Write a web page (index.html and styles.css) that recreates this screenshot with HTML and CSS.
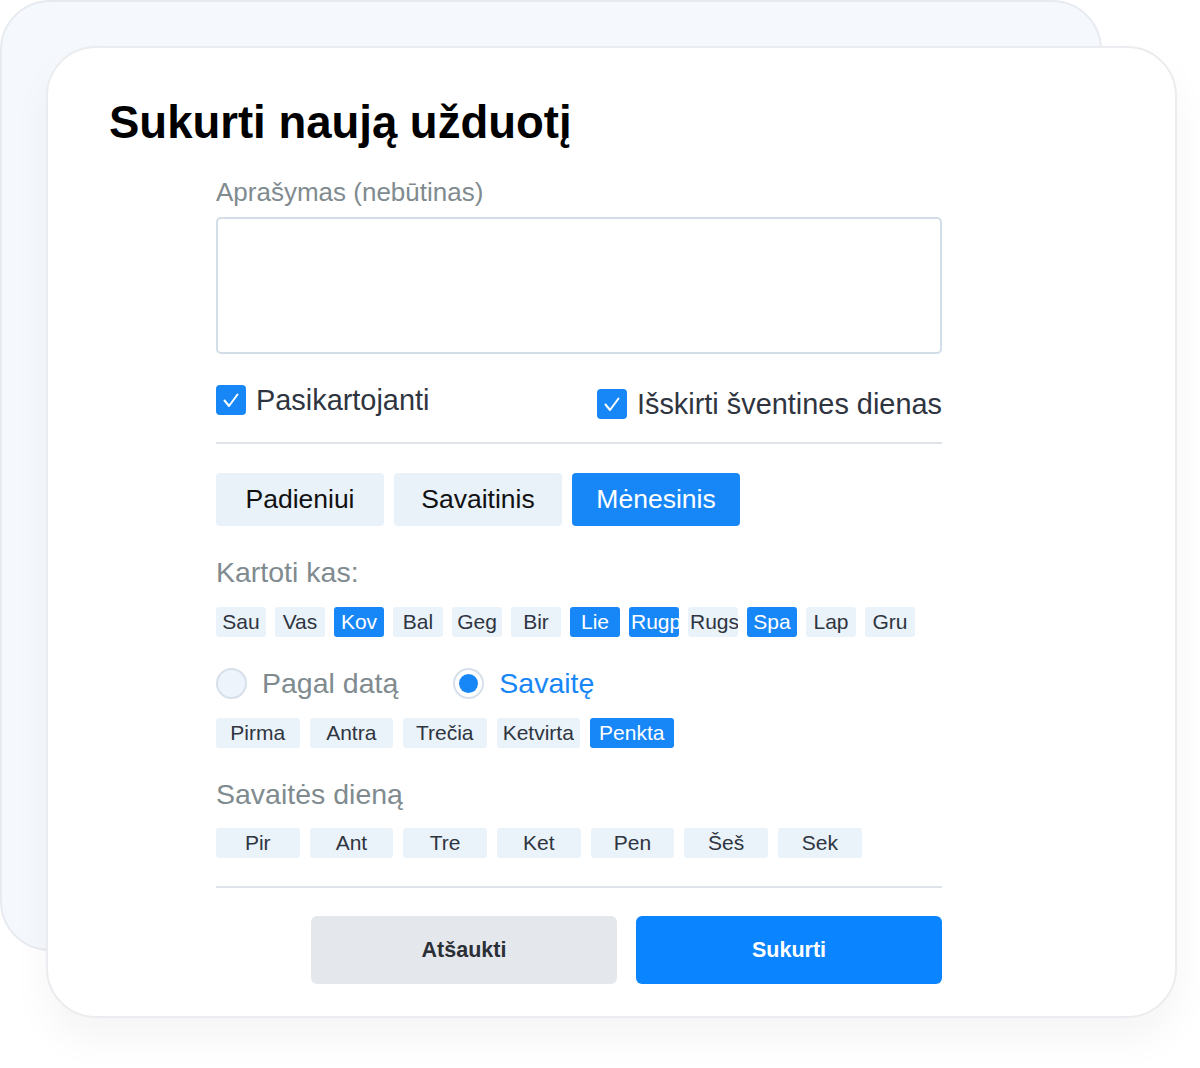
FILE: index.html
```html
<!DOCTYPE html>
<html lang="lt">
<head>
<meta charset="utf-8">
<title>Sukurti naują užduotį</title>
<link rel="stylesheet" href="styles.css">
</head>
<body>
<div class="stage">
  <div class="card">
    <h1 class="title">Sukurti naują užduotį</h1>
    <div class="form">
      <div class="label label-sm">Aprašymas (nebūtinas)</div>
      <div class="textarea"></div>

      <div class="check-row">
        <label class="check">
          <span class="box"><svg viewBox="0 0 30 30" width="30" height="30"><polyline points="8.5,15.5 13,21 21.5,9.5" fill="none" stroke="#fff" stroke-width="2" stroke-linecap="round" stroke-linejoin="round"/></svg></span>
          <span class="check-text">Pasikartojanti</span>
        </label>
        <label class="check check-low">
          <span class="box"><svg viewBox="0 0 30 30" width="30" height="30"><polyline points="8.5,15.5 13,21 21.5,9.5" fill="none" stroke="#fff" stroke-width="2" stroke-linecap="round" stroke-linejoin="round"/></svg></span>
          <span class="check-text">Išskirti šventines dienas</span>
        </label>
      </div>

      <div class="divider div-1"></div>

      <div class="segments">
        <div class="seg">Padieniui</div>
        <div class="seg">Savaitinis</div>
        <div class="seg seg-active">Mėnesinis</div>
      </div>

      <div class="label label-kartoti">Kartoti kas:</div>
      <div class="chips months">
        <span class="chip">Sau</span>
        <span class="chip">Vas</span>
        <span class="chip on">Kov</span>
        <span class="chip">Bal</span>
        <span class="chip">Geg</span>
        <span class="chip">Bir</span>
        <span class="chip on">Lie</span>
        <span class="chip on">Rugp</span>
        <span class="chip">Rugs</span>
        <span class="chip on">Spa</span>
        <span class="chip">Lap</span>
        <span class="chip">Gru</span>
      </div>

      <div class="radio-row">
        <label class="radio"><span class="circle"></span><span class="radio-text">Pagal datą</span></label>
        <label class="radio radio-on"><span class="circle"><span class="dot"></span></span><span class="radio-text">Savaitę</span></label>
      </div>

      <div class="chips weeks">
        <span class="chip wide">Pirma</span>
        <span class="chip wide">Antra</span>
        <span class="chip wide">Trečia</span>
        <span class="chip wide">Ketvirta</span>
        <span class="chip wide on">Penkta</span>
      </div>

      <div class="label label-day">Savaitės dieną</div>
      <div class="chips days">
        <span class="chip wide">Pir</span>
        <span class="chip wide">Ant</span>
        <span class="chip wide">Tre</span>
        <span class="chip wide">Ket</span>
        <span class="chip wide">Pen</span>
        <span class="chip wide">Šeš</span>
        <span class="chip wide">Sek</span>
      </div>

      <div class="divider div-2"></div>

      <div class="actions">
        <button class="btn btn-cancel">Atšaukti</button>
        <button class="btn btn-primary">Sukurti</button>
      </div>
    </div>
  </div>
</div>
</body>
</html>
```

FILE: styles.css
```css
* { box-sizing: border-box; }

html, body {
  margin: 0;
  padding: 0;
  background: #ffffff;
}

body {
  font-family: "Liberation Sans", Arial, Helvetica, sans-serif;
  color: #2f3540;
}

.stage {
  position: relative;
  width: 1200px;
  height: 1068px;
  padding: 46px 24px 0 46px;
}

.stage::before {
  content: "";
  position: absolute;
  left: 0;
  top: 0;
  width: 1098px;
  height: 947px;
  background: #f5f8fd;
  border: 2px solid #e7ebf1;
  border-radius: 50px;
}

.card {
  position: relative;
  width: 1131px;
  height: 972px;
  background: #ffffff;
  border: 2px solid #ebecef;
  border-radius: 50px;
  box-shadow: 0 22px 40px rgba(0, 0, 0, 0.045);
  padding: 47px 0 0 61px;
}

.title {
  margin: 0;
  font-size: 45.5px;
  line-height: 56px;
  font-weight: 700;
  color: #000000;
  letter-spacing: 0;
}

.form {
  margin-left: 107px;
  width: 726px;
}

.label {
  color: #808b8f;
  font-size: 28.5px;
  line-height: 32px;
}

.label-sm {
  font-size: 26px;
  line-height: 30px;
  margin-top: 26px;
}

.textarea {
  margin-top: 10px;
  height: 137px;
  border: 2px solid #d3dde8;
  border-radius: 5px;
  background: #fff;
}

.check-row {
  margin-top: 31px;
  display: flex;
  justify-content: space-between;
  align-items: flex-start;
  height: 34px;
}

.check {
  display: flex;
  align-items: center;
  gap: 10px;
}

.check-low {
  margin-top: 4px;
}

.box {
  width: 30px;
  height: 30px;
  border-radius: 4px;
  background: #1786f7;
  display: block;
}

.box svg { display: block; }

.check-text {
  font-size: 28.9px;
  line-height: 30px;
  color: #2f3540;
}

.divider {
  height: 2px;
  background: #dfe4ea;
}

.div-1 { margin-top: 23px; }
.div-2 { margin-top: 28px; }

.segments {
  margin-top: 29px;
  display: flex;
  gap: 10px;
}

.seg {
  width: 168px;
  height: 53px;
  border-radius: 4px;
  background: #e9f1f9;
  color: #111111;
  font-size: 26.5px;
  display: flex;
  align-items: center;
  justify-content: center;
}

.seg-active {
  background: #1786f7;
  color: #ffffff;
}

.label-kartoti { margin-top: 30px; }

.chips {
  display: flex;
}

.months {
  margin-top: 19px;
  gap: 9px;
}

.chip {
  width: 50px;
  height: 30px;
  padding: 0 2px;
  border-radius: 3px;
  background: #eaf2fa;
  color: #2f3540;
  font-size: 21px;
  line-height: 30px;
  text-align: center;
  white-space: nowrap;
  overflow: hidden;
  display: block;
}

.chip.on {
  background: #1786f7;
  color: #ffffff;
}

.chip.wide {
  width: 83.5px;
}

.radio-row {
  margin-top: 31px;
  display: flex;
  gap: 55px;
  height: 30px;
}

.radio {
  display: flex;
  align-items: center;
  gap: 15px;
}

.circle {
  width: 31px;
  height: 31px;
  border-radius: 50%;
  border: 2px solid #d7e0ea;
  background: #eef4fb;
  display: flex;
  align-items: center;
  justify-content: center;
}

.radio-on .circle {
  background: #ffffff;
}

.dot {
  width: 19px;
  height: 19px;
  border-radius: 50%;
  background: #1786f7;
}

.radio-text {
  font-size: 28.5px;
  line-height: 30px;
  color: #808b8f;
}

.radio-on .radio-text {
  color: #1786f7;
}

.weeks {
  margin-top: 20px;
  gap: 10px;
}

.label-day { margin-top: 30px; }

.days {
  margin-top: 18px;
  gap: 10.2px;
}

.actions {
  margin-top: 28px;
  display: flex;
  justify-content: flex-end;
  gap: 19px;
}

.btn {
  width: 306px;
  height: 68px;
  border: none;
  border-radius: 6px;
  font-family: "Liberation Sans", Arial, Helvetica, sans-serif;
  font-size: 21.5px;
  font-weight: 700;
  padding: 0;
}

.btn-cancel {
  background: #e4e7ec;
  color: #2b2f36;
}

.btn-primary {
  background: #0a84ff;
  color: #ffffff;
}
```
